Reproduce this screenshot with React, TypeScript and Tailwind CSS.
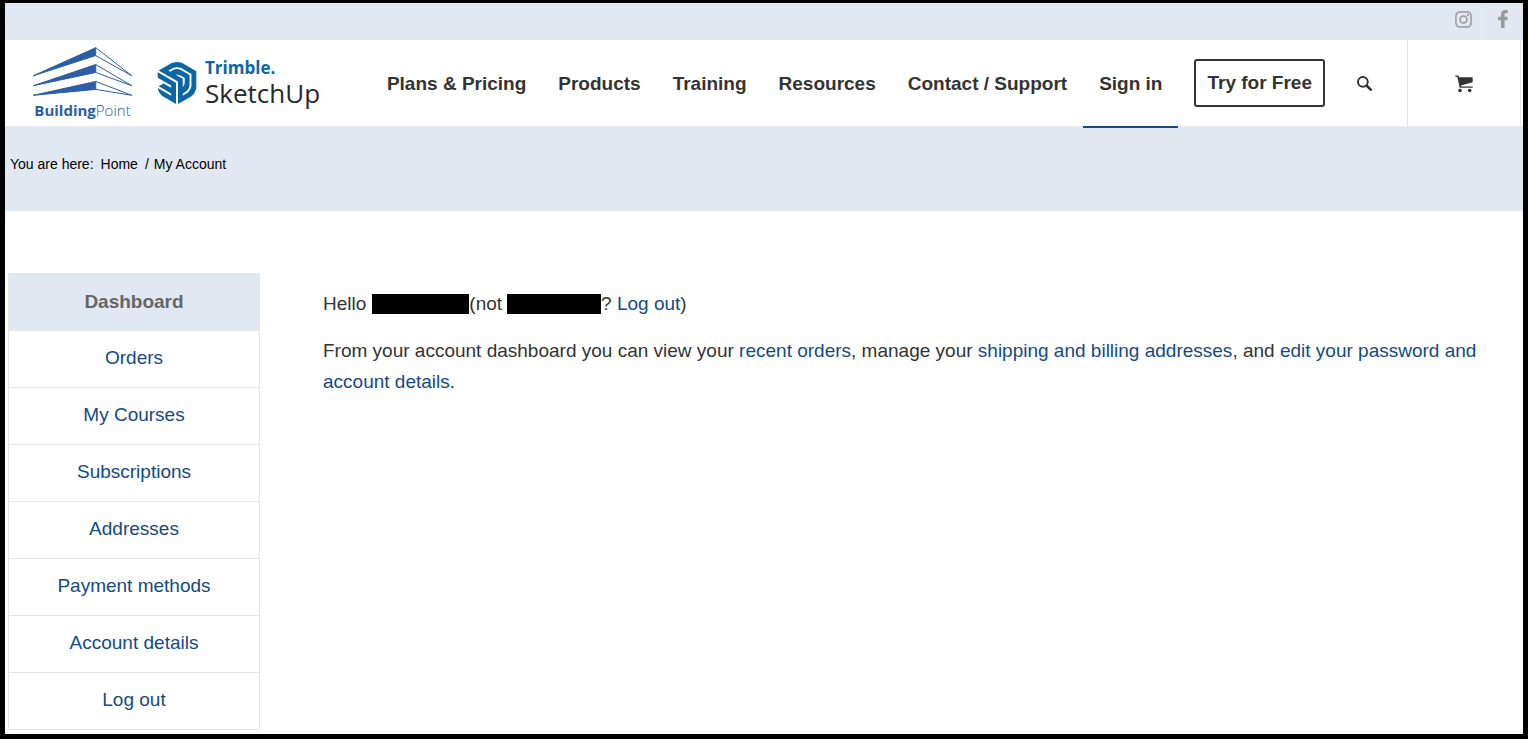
import type { ReactNode } from "react";
import { FaFacebookF, FaInstagram } from "react-icons/fa";
import { SiSketchup } from "react-icons/si";

const navItems = [
  "Plans & Pricing",
  "Products",
  "Training",
  "Resources",
  "Contact / Support",
  "Sign in",
];

const accountItems = [
  "Orders",
  "My Courses",
  "Subscriptions",
  "Addresses",
  "Payment methods",
  "Account details",
  "Log out",
];

function BuildingPointLogo() {
  return (
    <a href="#home" aria-label="BuildingPoint" className="flex w-[101px] flex-col items-center text-[#2a5ea5]">
      <svg viewBox="38 22 302 148" className="h-[49px] w-[101px]" aria-hidden="true">
        {[
          { tip: 109, top: 24 },
          { tip: 139, top: 75 },
          { tip: 168, top: 126 },
        ].map(({ tip, top }) => (
          <g key={top} stroke="currentColor" strokeWidth="3" strokeLinejoin="round">
            <path d={`M40 ${tip} L229 ${top} V${top + 24} Z`} fill="currentColor" />
            <path d={`M229 ${top} L338 ${tip} L229 ${top + 24}`} fill="none" />
          </g>
        ))}
      </svg>
      <span className="mt-1 font-['Open_Sans',sans-serif] text-[15px] leading-5 font-bold">
        Building<span className="font-light">Point</span>
      </span>
    </a>
  );
}

function SketchUpLogo() {
  return (
    <a href="#home" className="flex items-center gap-[7px] font-['Open_Sans',sans-serif]">
      <SiSketchup className="size-[42px] text-[#0a66a5]" aria-hidden="true" />
      <span className="flex flex-col">
        <span className="text-[17px] leading-5 font-bold text-[#0a66a5]">Trimble.</span>
        <span className="text-[26px] leading-[30px] font-medium text-[#252a2e]">SketchUp</span>
      </span>
    </a>
  );
}

function SearchIcon() {
  return (
    <svg viewBox="110 224 46 46" className="size-[15px]" fill="none" stroke="currentColor" aria-hidden="true">
      <circle cx="128" cy="242" r="15" strokeWidth="6" />
      <path d="M140 254 L152 266" strokeWidth="8" strokeLinecap="round" />
    </svg>
  );
}

function CartIcon() {
  return (
    <svg viewBox="404 227 54 53" className="h-[18px] w-[18px]" fill="currentColor" aria-hidden="true">
      <path d="M405 228 H415 L416 233 H457 V248 L422 258 L423 261 H457 V265 H418 L411 232 H405 Z" />
      <circle cx="419" cy="273" r="5.5" />
      <circle cx="448" cy="273" r="5.5" />
    </svg>
  );
}

function TextLink({ children }: { children: ReactNode }) {
  return (
    <a href="#account" className="text-[#134a84]">
      {children}
    </a>
  );
}

export default function App() {
  return (
    <div className="min-h-screen bg-white pr-px font-['Liberation_Sans',Arial,sans-serif] text-[#333]">
      <div className="min-h-screen border-x-[5px] border-t-[3px] border-b-[5px] border-black bg-white">
        <div className="flex h-[37px] items-stretch justify-end bg-[#e2e8f2] text-[#999]">
          <a href="#instagram" aria-label="Instagram" className="flex w-[38px] items-center justify-center border-r border-[#e8ebf2] pb-[5px]">
            <FaInstagram className="size-[19px]" />
          </a>
          <a href="#facebook" aria-label="Facebook" className="flex w-10 items-center justify-center pb-[5px]">
            <FaFacebookF className="size-[18px]" />
          </a>
        </div>

        <header className="flex h-[87px] items-stretch border-b border-[#e6e8ee] pr-[2px] pl-[27px]">
          <div className="flex items-center gap-[23px]">
            <BuildingPointLogo />
            <SketchUpLogo />
          </div>
          <nav aria-label="Main" className="ml-auto flex items-stretch text-[19px] font-bold">
            {navItems.map((item) => (
              <a
                key={item}
                href="#menu"
                className={
                  item === "Sign in"
                    ? "-mb-[2px] flex items-center border-b-2 border-[#134a84] px-4 pt-[2px]"
                    : "flex items-center px-4 pt-[2px]"
                }
              >
                {item}
              </a>
            ))}
            <a href="#try" className="mx-4 flex h-12 items-center self-center rounded-[3px] border-2 border-[#333] px-[11px]">
              Try for Free
            </a>
            <button type="button" aria-label="Search" className="flex items-center pr-[35px] pl-4">
              <SearchIcon />
            </button>
          </nav>
          <a href="#cart" aria-label="Cart" className="flex w-[114px] items-center justify-center border-x border-[#e6e6e6] pt-[2px]">
            <CartIcon />
          </a>
        </header>

        <nav aria-label="Breadcrumb" className="flex h-[84px] gap-[7px] bg-[#e2e8f2] px-[5px] pt-[27px] text-[14px] leading-5 text-black">
          <span>You are here:</span>
          <a href="#home">Home</a>
          <span className="-mr-[2px]">/</span>
          <a href="#account">My Account</a>
        </nav>

        <main className="flex items-start pt-[62px] pr-10 pb-1 pl-[3px] text-[19px]">
          <nav aria-label="Account" className="w-[252px] shrink-0 border border-b-0 border-[#e6e6e6] text-center">
            <a href="#dashboard" className="flex h-[57px] items-center justify-center bg-[#e2e8f2] font-bold text-[#666]">
              Dashboard
            </a>
            {accountItems.map((item) => (
              <a key={item} href="#account" className="flex h-[57px] items-center justify-center border-b border-[#e6e6e6] pb-[2px] text-[#134a84]">
                {item}
              </a>
            ))}
          </nav>
          <section className="ml-[63px] flex flex-col gap-4 pt-[15px] leading-[31px]">
            <p className="flex items-center">
              <span>Hello</span>
              <span className="ml-[6px] h-5 w-[97px] bg-black" />
              <span>(not</span>
              <span className="ml-[5px] h-5 w-[94px] bg-black" />
              <span>
                ? <TextLink>Log out</TextLink>)
              </span>
            </p>
            <p>
              From your account dashboard you can view your <TextLink>recent orders</TextLink>, manage your{" "}
              <TextLink>shipping and billing addresses</TextLink>, and{" "}
              <TextLink>edit your password and account details</TextLink>.
            </p>
          </section>
        </main>
      </div>
    </div>
  );
}
